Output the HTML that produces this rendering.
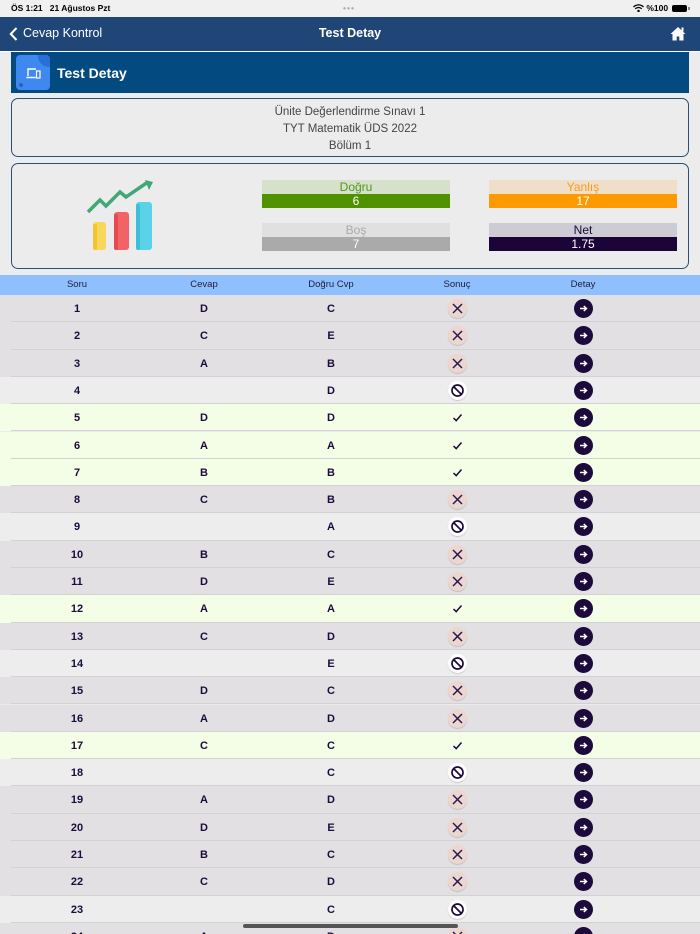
<!DOCTYPE html><html><head><meta charset="utf-8"><style>
*{margin:0;padding:0;box-sizing:border-box}
html,body{width:700px;height:934px;overflow:hidden}
body{background:#ececec;font-family:"Liberation Sans",sans-serif;position:relative}
.abs{position:absolute}
.row{position:absolute;left:0;width:700px;height:27.3px;font-weight:bold;font-size:11px;color:#1c0b3d}
.row .ln{position:absolute;left:11px;right:0;bottom:0;height:1px;background:#d2d2d2}
.c{position:absolute;top:1px;height:27px;line-height:27px;text-align:center;width:60px;margin-left:-30px}
.ic{position:absolute;top:4px;width:19px;height:19px;border-radius:50%;margin-left:-9.5px;display:block}
.ic svg{display:block}
.w{background:#e2e0e2}.bl{background:#ededed}.g{background:#f4fde6}
.stat{position:absolute;width:188px;font-size:12px;text-align:center}
.stat .t{height:14px;line-height:15px}
.stat .v{height:14px;line-height:14px;color:#fff}
</style></head><body>
<div class="abs" style="left:0;top:0;width:700px;height:17px;background:#f0f0f0;font-size:8.5px;font-weight:bold;line-height:17px">
<span class="abs" style="left:11px">ÖS 1:21&nbsp;&nbsp;&nbsp;21 Ağustos Pzt</span>
<span class="abs" style="left:343px;color:#aaa;letter-spacing:1px">•••</span>
<span class="abs" style="left:633px;top:0">
<svg width="11" height="8" viewBox="0 0 11 8" style="vertical-align:-1px"><path d="M0.5 3A7 7 0 0 1 10.5 3M2.3 4.8A4.5 4.5 0 0 1 8.7 4.8" stroke="#000" stroke-width="1.3" fill="none"/><circle cx="5.5" cy="7" r="1.2"/></svg> %100</span>
<span class="abs" style="left:672px;top:5px;width:15px;height:7px;background:#000;border-radius:2px"></span>
<span class="abs" style="left:688px;top:7px;width:1.5px;height:3px;background:#888"></span>
</div>
<div class="abs" style="left:0;top:17px;width:700px;height:34px;background:#1f4677;color:#fff">
<svg class="abs" style="left:9px;top:10px" width="9" height="14" viewBox="0 0 9 14"><path d="M7.5 1L1.8 7l5.7 6" stroke="#fff" stroke-width="2" fill="none"/></svg>
<span class="abs" style="left:23px;top:9px;font-size:12.5px">Cevap Kontrol</span>
<span class="abs" style="left:0;width:700px;text-align:center;top:9px;font-size:12.5px;font-weight:bold">Test Detay</span>
<svg class="abs" style="left:670px;top:9px" width="16" height="15" viewBox="0 0 16 15"><path d="M8 1L0.5 8h2v6.5h4.2v-4h2.6v4h4.2V8h2z" fill="#fff"/><rect x="11.5" y="1.5" width="2" height="4" fill="#fff"/></svg>
</div>
<div class="abs" style="left:0;top:51px;width:700px;height:1px;background:#fff"></div>
<div class="abs" style="left:11px;top:52px;width:678px;height:41px;background:#034a80">
<div class="abs" style="left:5px;top:3px;width:34px;height:35px;background:#3f88f0;border-radius:4px;overflow:hidden">
<div class="abs" style="left:22px;top:-10px;width:22px;height:22px;border-radius:50%;background:#2a6fd8"></div>
<svg class="abs" style="left:10px;top:13px" width="15" height="11" viewBox="0 0 15 11"><path d="M2 8V1h8M0.5 9.5h9" stroke="#fff" stroke-width="1.4" fill="none"/><rect x="10.5" y="3" width="3.5" height="7" stroke="#fff" stroke-width="1.2" fill="none"/></svg>
<div class="abs" style="left:3px;top:28px;width:4px;height:4px;border-radius:50%;background:#2a5fc0"></div>
</div>
<span class="abs" style="left:46px;top:13px;color:#fff;font-size:14px;font-weight:bold">Test Detay</span>
</div>
<div class="abs" style="left:11px;top:98px;width:678px;height:59px;border:1.5px solid #2a4f7e;border-radius:7px;text-align:center;font-size:11.5px;color:#444;line-height:17px;padding-top:5px">Ünite Değerlendirme Sınavı 1<br>TYT Matematik ÜDS 2022<br>Bölüm 1</div>
<div class="abs" style="left:11px;top:163px;width:678px;height:106px;border:1.5px solid #2a4f7e;border-radius:7px"></div>
<svg class="abs" style="left:85px;top:180px" width="72" height="72" viewBox="0 0 72 72">
<path d="M3 32L15 20l6 6 14-14 6 5 22-15" stroke="#3fa878" stroke-width="3.5" fill="none"/><path d="M60 0l8 2-4 8z" fill="#3fa878"/>
<rect x="8" y="42" width="13" height="28" rx="3" fill="#f8d75a"/><rect x="8" y="44" width="4" height="26" rx="2" fill="#f2c530"/>
<rect x="29" y="32" width="15" height="38" rx="3" fill="#f26368"/><rect x="29" y="34" width="4" height="36" rx="2" fill="#e8494f"/>
<rect x="51" y="22" width="16" height="48" rx="3" fill="#5ad2e8"/><rect x="51" y="24" width="4" height="46" rx="2" fill="#3cc0da"/>
</svg>
<div class="stat" style="left:262px;top:180px"><div class="t" style="background:#d6e0ca;color:#4d9a1a">Doğru</div><div class="v" style="background:#4f9200">6</div></div>
<div class="stat" style="left:489px;top:180px"><div class="t" style="background:#efdfc8;color:#fb9a1a">Yanlış</div><div class="v" style="background:#fe9a01">17</div></div>
<div class="stat" style="left:262px;top:223px"><div class="t" style="background:#e0e0e0;color:#aaa">Boş</div><div class="v" style="background:#aaa">7</div></div>
<div class="stat" style="left:489px;top:223px"><div class="t" style="background:#cdcbd3;color:#1d0a3c">Net</div><div class="v" style="background:#1b0538">1.75</div></div>
<div class="abs" style="left:0;top:275px;width:700px;height:20px;background:#8fbffe;font-size:9.5px;color:#1d1d3d;line-height:20px">
<span class="c" style="left:77px;top:0;height:20px;line-height:20px">Soru</span><span class="c" style="left:204px;top:0;height:20px;line-height:20px">Cevap</span><span class="c" style="left:331px;top:0;height:20px;line-height:20px;width:80px;margin-left:-40px">Doğru Cvp</span><span class="c" style="left:457px;top:0;height:20px;line-height:20px">Sonuç</span><span class="c" style="left:583px;top:0;height:20px;line-height:20px">Detay</span></div>
<div id="rows"></div>
<div class="abs" style="left:243px;top:924px;width:215px;height:4px;border-radius:2px;background:#555"></div>
<script>
var d=[["1","D","C","x"],["2","C","E","x"],["3","A","B","x"],["4","","D","b"],["5","D","D","c"],["6","A","A","c"],["7","B","B","c"],["8","C","B","x"],["9","","A","b"],["10","B","C","x"],["11","D","E","x"],["12","A","A","c"],["13","C","D","x"],["14","","E","b"],["15","D","C","x"],["16","A","D","x"],["17","C","C","c"],["18","","C","b"],["19","A","D","x"],["20","D","E","x"],["21","B","C","x"],["22","C","D","x"],["23","","C","b"],["24","A","D","x"]];
var h="";
d.forEach(function(r,i){
var bg=r[3]=="x"?"w":r[3]=="b"?"bl":"g";
var ic=r[3]=="x"?'<div class="ic" style="left:457px;background:#ecd6d0;box-shadow:0 1px 1px rgba(0,0,0,.15)"><svg width="19" height="19" viewBox="0 0 19 19"><path d="M5 5l9 9M14 5l-9 9" stroke="#2a1850" stroke-width="1.5"/></svg></div>':
r[3]=="b"?'<div class="ic" style="left:457px;background:#fff;box-shadow:0 1px 1px rgba(0,0,0,.15)"><svg width="19" height="19" viewBox="0 0 19 19"><circle cx="9.5" cy="9.5" r="5.5" stroke="#1d0a3c" stroke-width="1.7" fill="none"/><path d="M5.6 5.6l7.8 7.8" stroke="#1d0a3c" stroke-width="1.7"/></svg></div>':
'<div class="ic" style="left:457px"><svg width="19" height="19" viewBox="0 0 19 19"><path d="M5.5 10l2.7 2.6L13.5 6.5" stroke="#1d0a3c" stroke-width="1.5" fill="none"/></svg></div>';
h+='<div class="row '+bg+'" style="top:'+(295+i*27.3)+'px"><span class="c" style="left:77px">'+r[0]+'</span><span class="c" style="left:204px">'+r[1]+'</span><span class="c" style="left:331px">'+r[2]+'</span>'+ic+'<div class="ic" style="left:583px;background:#1d0a3c"><svg width="19" height="19" viewBox="0 0 19 19"><path d="M6 9.5h6.5M9.8 7l2.7 2.5L9.8 12" stroke="#fff" stroke-width="1.5" fill="none"/></svg></div><div class="ln"></div></div>';});
document.getElementById("rows").innerHTML=h;
</script>
</body></html>
